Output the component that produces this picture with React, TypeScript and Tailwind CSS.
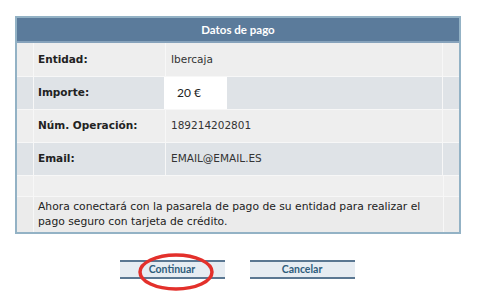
const rows = [
  { label: 'Entidad:', value: 'Ibercaja', bg: 'bg-[#eeeeee]', h: 'h-[34px]' },
  { label: 'Importe:', value: '20 €', bg: 'bg-[#dfe3e7]', h: 'h-[33px]', box: true },
  { label: 'Núm. Operación:', value: '189214202801', bg: 'bg-[#eeeeee]', h: 'h-[33px]' },
  { label: 'Email:', value: 'EMAIL@EMAIL.ES', bg: 'bg-[#dfe3e7]', h: 'h-[33px]' },
];

const verdana = "font-['DejaVu_Sans',sans-serif]";
const calibri = "font-['Lato',sans-serif]";

function DataRow({ label, value, bg, h, box }: (typeof rows)[number]) {
  return (
    <div className={`flex ${h} ${bg} border-b border-[#f7f7f7]`}>
      <div className="w-[17px] border-r border-[#f7f7f7]" />
      <div className={`w-[131px] flex items-center pl-[4px] text-[10.5px] font-bold text-[#222] ${verdana}`}>
        {label}
      </div>
      <div className="w-[278px] flex border-l border-r border-[#f7f7f7]">
        {box ? (
          <div className={`w-[63px] -ml-[2px] bg-white flex items-center pl-[13px] text-[12px] text-[#222] ${calibri}`}>
            {value}
          </div>
        ) : (
          <div className={`flex items-center pl-[5px] text-[10.5px] text-[#333] ${verdana}`}>{value}</div>
        )}
      </div>
      <div className="flex-1" />
    </div>
  );
}

function Button({ children }: { children: string }) {
  return (
    <button
      className={`w-[105px] h-[19px] bg-[#e6ecf2] border-y-2 border-[#5a7792] text-[10.5px] font-bold text-[#2f5d7c] ${calibri}`}
    >
      {children}
    </button>
  );
}

export default function App() {
  return (
    <div className="w-[482px] h-[295px] bg-white pt-[16px] pl-[15px] relative">
      <div className="w-[446px] border-2 border-[#93b2c5] bg-[#eeeeee]">
        <div
          className={`h-[25px] bg-[#5b7b9b] border-b-2 border-[#86a2bb] flex items-center justify-center text-white text-[11.5px] font-bold ${calibri}`}
        >
          Datos de pago
        </div>
        {rows.map((r) => (
          <DataRow key={r.label} {...r} />
        ))}
        <div className="flex h-[21px] bg-[#efefef] border-b border-[#f7f7f7]">
          <div className="w-[17px] border-r border-[#f7f7f7]" />
          <div className="w-[410px] border-r border-[#f7f7f7]" />
        </div>
        <div className="flex h-[35px] bg-[#ebebeb]">
          <div className="w-[17px] border-r border-[#f7f7f7]" />
          <div className={`w-[410px] border-r border-[#f7f7f7] pl-[4px] pr-[10px] pt-[2px] text-[10.75px] leading-[15px] text-[#222] ${verdana}`}>
            Ahora conectará con la pasarela de pago de su entidad para realizar el pago seguro con tarjeta de crédito.
          </div>
        </div>
      </div>
      <div className="flex justify-center gap-[25px] mt-[26px] pr-[23px]">
        <Button>Continuar</Button>
        <Button>Cancelar</Button>
      </div>
      <svg className="absolute left-[138px] top-[253px]" width="80" height="40" viewBox="0 0 80 40">
        <ellipse cx="38" cy="19" rx="36" ry="17" fill="none" stroke="#e3302b" strokeWidth="3.5" />
      </svg>
    </div>
  );
}
